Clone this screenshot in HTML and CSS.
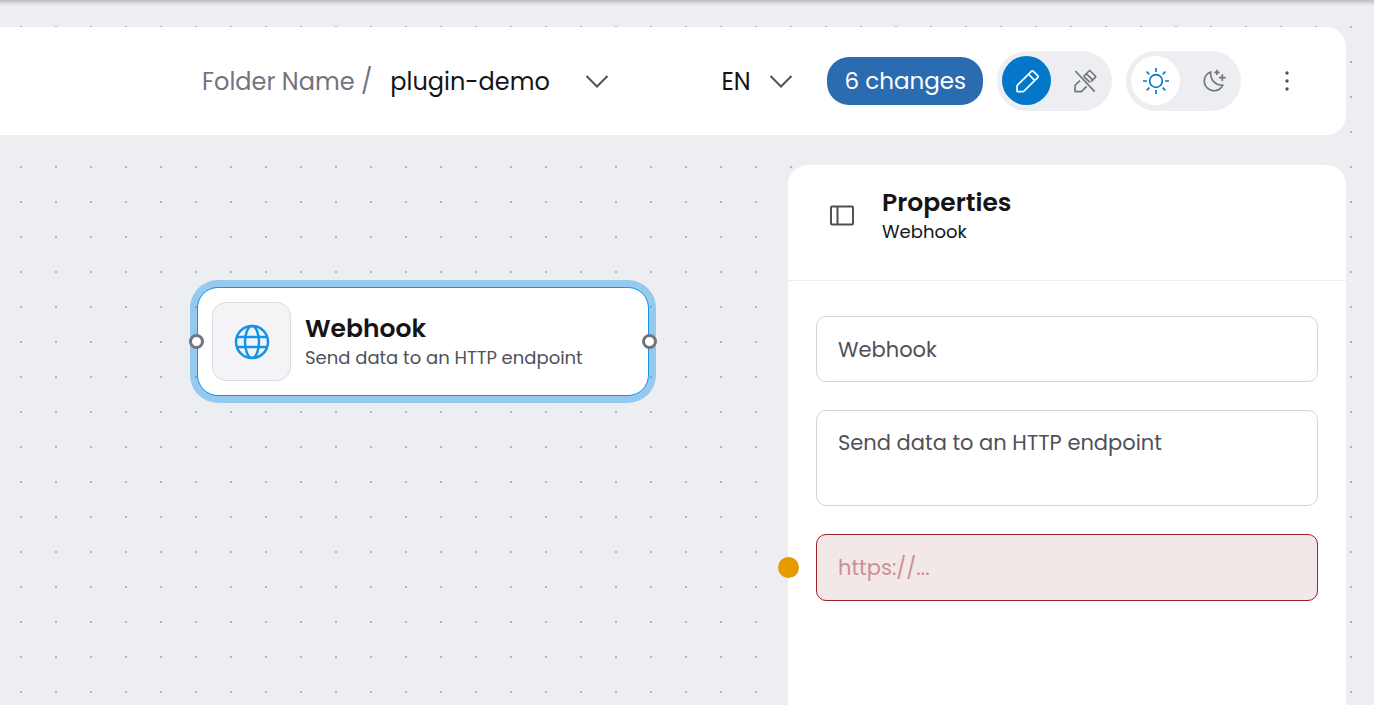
FILE: index.html
```html
<!DOCTYPE html>
<html lang="en">
<head>
<meta charset="utf-8">
<title>plugin-demo</title>
<link rel="stylesheet" href="styles.css">
</head>
<body>
<div class="app">
  <header class="toolbar">
    <nav class="breadcrumb" aria-label="Breadcrumb">
      <span class="folder">Folder Name /</span>
      <button class="project" type="button">plugin-demo
        <svg class="chevron" viewBox="0 0 24 24" aria-hidden="true"><path d="M1.5 7 12 17.500 22.500 7"/></svg>
      </button>
    </nav>
    <div class="actions">
      <div class="language">
        <select class="language-select" aria-label="Language"><option>EN</option><option>PL</option></select>
        <svg class="chevron" viewBox="0 0 24 24" aria-hidden="true"><path d="M1.500 7 12 17.500 22.500 7"/></svg>
      </div>
      <button class="changes" type="button">6 changes</button>
      <div class="toggle" role="group" aria-label="Mode">
        <button class="toggle-item toggle-primary" type="button" aria-label="Edit" aria-pressed="true">
          <svg class="icon" viewBox="0 0 72 72"><path d="M6 50 49 7q3-3 6 0l13 13q3 3 0 6L26 67q-1 1-3 1H9q-3 0-3-3V50ZM40 15l19 19"/></svg>
        </button>
        <button class="toggle-item" type="button" aria-label="Read only" aria-pressed="false">
          <svg class="icon" viewBox="0 0 72 72"><path d="M7 6l58 62M21 35 7 48q-1 1-1 3v14q0 3 3 3h14q2 0 3-1l15-15M32 22 48 6q2-2 4 0l15 15q2 2 0 4L54 38M40 14l18 18M32 22l19 18"/></svg>
        </button>
      </div>
      <div class="toggle" role="group" aria-label="Theme">
        <button class="toggle-item toggle-light" type="button" aria-label="Light" aria-pressed="true">
          <svg class="icon icon-sun" viewBox="0 0 84 84"><circle cx="42" cy="42" r="19"/><path d="M42 3v12M42 69v12M3 42h12M69 42h12M14 14l8 8M62 62l8 8M70 14l-8 8M22 62l-8 8"/></svg>
        </button>
        <button class="toggle-item" type="button" aria-label="Dark" aria-pressed="false">
          <svg class="icon" viewBox="0 0 72 72"><path d="M26 9A29 29 0 1 0 62 49Q44 49 34 37 25 26 26 9ZM45 2v16M37 10h16M61 16v20M51 26h20"/></svg>
        </button>
      </div>
      <button class="more" type="button" aria-label="More">
        <svg class="more-icon" viewBox="0 0 24 24"><circle cx="12" cy="4" r="1.700"/><circle cx="12" cy="12" r="1.700"/><circle cx="12" cy="20" r="1.700"/></svg>
      </button>
    </div>
  </header>
  <main class="workspace">
    <section class="canvas" aria-label="Diagram">
      <article class="node">
        <span class="handle handle-in"></span>
        <div class="node-icon">
          <svg class="globe" viewBox="0 0 36 36" aria-hidden="true"><circle cx="18" cy="18" r="16"/><ellipse cx="18" cy="18" rx="7" ry="16"/><path d="M3 13h30M3 23h30"/></svg>
        </div>
        <div class="node-text">
          <h2 class="title">Webhook</h2>
          <p class="node-description">Send data to an HTTP endpoint</p>
        </div>
        <span class="handle handle-out"></span>
      </article>
    </section>
    <aside class="panel">
      <header class="panel-header">
        <button class="collapse" type="button" aria-label="Collapse panel">
          <svg class="icon" viewBox="0 0 24 24"><rect x="1" y="2.500" width="22" height="18" rx="1"/><path d="M7.500 2.500v18"/></svg>
        </button>
        <div>
          <h2 class="title">Properties</h2>
          <p class="subtitle">Webhook</p>
        </div>
      </header>
      <form class="fields">
        <input class="field" type="text" aria-label="Title" value="Webhook">
        <textarea class="field field-area" aria-label="Description">Send data to an HTTP endpoint</textarea>
        <div class="field-row">
          <span class="marker"></span>
          <input class="field field-error" type="url" aria-label="URL" placeholder="https://..." aria-invalid="true">
        </div>
      </form>
    </aside>
  </main>
</div>
</body>
</html>
```
FILE: styles.css
```css
* { box-sizing: border-box; }

body {
  margin: 0;
  font-family: Poppins, Inter, sans-serif;
  color: #151516;
}

button, input, select, textarea { font: inherit; color: inherit; }

button {
  border: 0;
  padding: 0;
  background: none;
  cursor: pointer;
}

h2, p { margin: 0; }

svg {
  display: block;
  fill: none;
  stroke: currentColor;
}

.app {
  display: flex;
  flex-direction: column;
  gap: 30px;
  min-height: 100vh;
  padding: 27px 28px 0 0;
  background:
    linear-gradient(#b9babf, #d9dade 3px, transparent 6px) 0 0 / 100% 6px no-repeat,
    radial-gradient(circle at 18px 18px, #b4b5ba 1px, transparent 1px) 3px 9px / 35px 35px,
    #edeef2;
}

.toolbar {
  display: flex;
  align-items: center;
  justify-content: space-between;
  padding: 24px 35px 24px 202px;
  border-radius: 0 20px 20px 0;
  background: #fff;
  font-size: 24px;
}

.breadcrumb, .project, .actions, .language { display: flex; align-items: center; }

.breadcrumb { gap: 18px; }

.folder { color: #72747f; }

.project { gap: 35px; }

.chevron {
  width: 24px;
  height: 24px;
  stroke: #4f5059;
  stroke-width: 2;
  pointer-events: none;
}

.actions { gap: 14px; }

.language { margin-right: 20px; }

.language-select {
  width: 72px;
  margin-right: -24px;
  padding: 0;
  border: 0;
  appearance: none;
  background: none;
}

.changes {
  height: 48px;
  padding: 0 17px;
  border-radius: 22px;
  background: #2b6cb0;
  color: #fff;
  font-size: 23px;
}

.toggle {
  display: flex;
  gap: 9px;
  padding: 5px 3px 6px 5px;
  border-radius: 30px;
  background: #edeef2;
}

.toggle-item, .more {
  display: grid;
  place-items: center;
  width: 49px;
  height: 49px;
  border-radius: 50%;
  color: #72747f;
}

.toggle-primary { background: #0477c8; color: #fff; }

.toggle-light { background: #fff; color: #0477c8; }

.icon {
  width: 24px;
  height: 24px;
  stroke-width: 5;
}

.icon-sun { width: 28px; height: 28px; }

.more { margin-left: 7px; }

.more-icon {
  width: 24px;
  height: 24px;
  fill: #4f5059;
  stroke: none;
}

.workspace {
  display: grid;
  flex: 1;
  grid-template-columns: 788fr 558fr;
}

.canvas { position: relative; }

.node {
  position: absolute;
  top: 122px;
  left: 197px;
  display: flex;
  align-items: center;
  gap: 14px;
  width: 452px;
  padding: 14px;
  border: 1px solid #1294e8;
  border-radius: 21px;
  background: #fff;
  box-shadow: 0 0 0 7px rgb(18 148 232 / 40%);
}

.node-icon {
  display: grid;
  place-items: center;
  width: 79px;
  height: 79px;
  border: 1px solid #d9dae3;
  border-radius: 14px;
  background: #f4f4f7;
}

.globe {
  width: 36px;
  height: 36px;
  stroke: #1294e8;
  stroke-width: 2.500;
}

.title {
  font-size: 25px;
  font-weight: 600;
  line-height: 32px;
}

.node-description {
  color: #4f5059;
  font-size: 18px;
  line-height: 26px;
}

.handle {
  position: absolute;
  top: 46px;
  width: 15px;
  height: 15px;
  border: 3px solid #72747f;
  border-radius: 50%;
  background: #fff;
}

.handle-in { left: -9px; }

.handle-out { right: -9px; }

.panel {
  border-radius: 20px 20px 0 0;
  background: #fff;
}

.panel-header {
  display: flex;
  gap: 28px;
  padding: 22px 42px 35px;
  border-bottom: 1px solid #edeef2;
}

.collapse {
  align-self: center;
  color: #4f5059;
}

.collapse .icon { stroke-width: 2; }

.subtitle {
  font-size: 18px;
  line-height: 26px;
}

.fields {
  display: flex;
  flex-direction: column;
  gap: 28px;
  padding: 35px 28px;
}

.field {
  display: block;
  width: 100%;
  height: 66px;
  padding: 0 21px;
  border: 1px solid #d3d4e0;
  border-radius: 10px;
  background: #fff;
  color: #4f5059;
  font-size: 21px;
  line-height: 32px;
}

.field-area {
  height: 96px;
  padding-top: 16px;
  resize: none;
}

.field-row { position: relative; }

.field-error {
  height: 67px;
  border-color: #9b2226;
  background: #f3e8e8;
}

.field-error::placeholder { color: #cb8f91; opacity: 1; }

.marker {
  position: absolute;
  top: 23px;
  left: -38px;
  width: 21px;
  height: 21px;
  border-radius: 50%;
  background: #e59a00;
}
```
